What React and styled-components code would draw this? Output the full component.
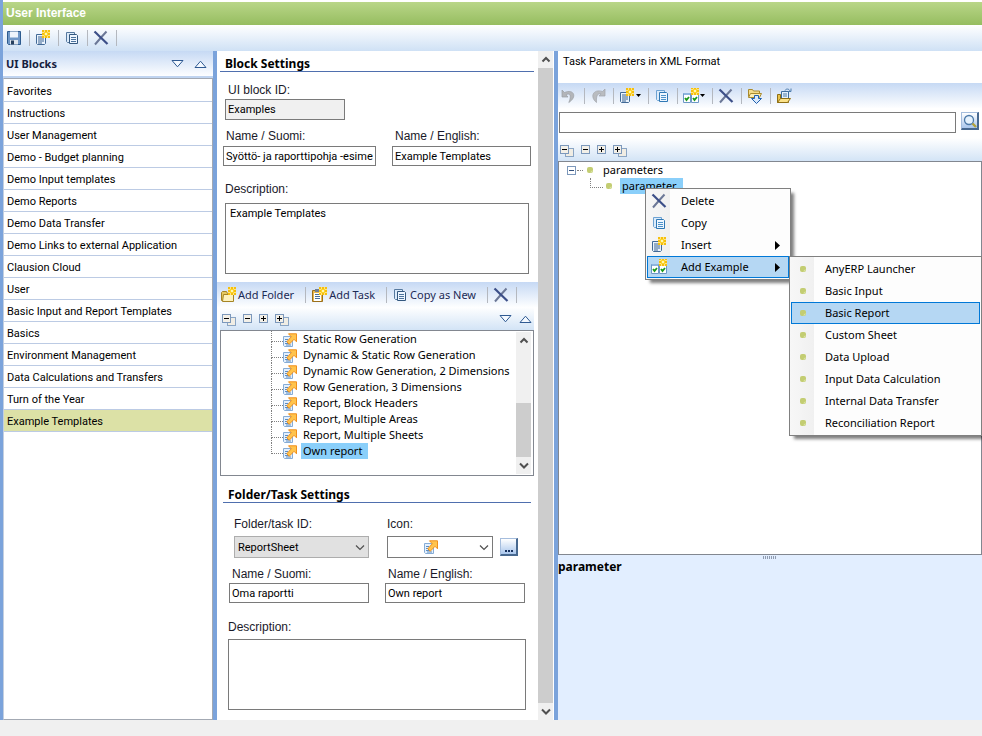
import React from 'react';
import styled, { createGlobalStyle, css } from 'styled-components';

const GlobalStyle = createGlobalStyle`
  :root {
    --font-ui: Roboto, 'Liberation Sans', sans-serif;
    --font-label: 'Liberation Sans', Arial, sans-serif;
    --font-tree: 'Noto Sans', 'Open Sans', sans-serif;
    --splitter: #7ba3db;
    --bar: linear-gradient(#c6d9f4, #fdfeff);
    --bar-light: linear-gradient(#ffffff, #d3e4f6);
    --highlight: #8acffa;
  }

  * {
    box-sizing: border-box;
  }

  body {
    margin: 0;
    background: #f0f0f0;
    color: #000;
    font-family: var(--font-ui);
    font-size: 11px;
  }

  button,
  input,
  select,
  textarea {
    font: inherit;
    color: inherit;
  }

  ul {
    margin: 0;
    padding: 0;
    list-style: none;
  }

  svg {
    display: block;
    flex: none;
  }
`;

/* ---------- layout ---------- */

const Window = styled.div`
  display: flex;
  flex-direction: column;
  min-height: 100vh;
  padding-bottom: 16px;
  overflow: hidden;
`;

const Frame = styled.div`
  flex: 1;
  display: flex;
  flex-direction: column;
  border-left: 3px solid var(--splitter);
  background: #fff;
`;

const TitleBar = styled.h1`
  margin: 2px 0 0;
  padding: 0 3px;
  height: 23px;
  font: bold 12px/22px var(--font-label);
  color: #fff;
  background: linear-gradient(#b9d688, #96bd60);
`;

const MainToolbar = styled.div`
  display: flex;
  align-items: center;
  height: 26px;
  padding: 0 3px;
  background: linear-gradient(#ffffff, #cfe1f5);
`;

const Workspace = styled.main`
  flex: 1;
  display: flex;
`;

const Sidebar = styled.nav`
  flex: none;
  display: flex;
  flex-direction: column;
  width: 210px;
  background: #c0d4f0;
`;

const Center = styled.section`
  flex: none;
  display: flex;
  width: 341px;
  border-left: 4px solid var(--splitter);
`;

const CenterContent = styled.div`
  flex: 1;
  padding-bottom: 10px;
`;

const Details = styled.section`
  flex: 1;
  display: flex;
  flex-direction: column;
  min-width: 0;
  border-left: 4px solid var(--splitter);
  background: #e2eeff;
`;

/* ---------- toolbars ---------- */

const Toolbar = styled.div`
  display: flex;
  align-items: center;
  height: 25px;
  padding: 0 3px;
  background: var(--bar);
  font: 11px/16px var(--font-tree);
  color: #1c2a55;
`;

const ToolButton = styled.button`
  display: flex;
  align-items: center;
  gap: ${({ $menu }) => ($menu ? '1px' : '2px')};
  height: 20px;
  padding: 0 ${({ $text }) => ($text ? '4px' : '0')} 0 0;
  border: 0;
  background: none;
  white-space: nowrap;
`;

const Separator = styled.span`
  width: 1px;
  height: 16px;
  margin: 0 5px 0 7px;
  background: #b4b8bf;
`;

const TreeBar = styled.div`
  display: flex;
  align-items: center;
  gap: 7px;
  height: 23px;
  margin: ${({ $inset }) => ($inset ? '0 4px 0 3px' : '0')};
  padding: 0 2px;
  background: var(--bar-light);
`;

const Spacer = styled.span`
  flex: 1;
`;

const SidebarHead = styled.div`
  display: flex;
  align-items: center;
  gap: 10px;
  height: 25px;
  margin-bottom: 2px;
  padding: 0 6px 0 3px;
  background: var(--bar);
`;

const SidebarTitle = styled.h2`
  flex: 1;
  margin: 0;
  font: bold 11px/16px var(--font-tree);
  color: #16213f;
`;

const BlockList = styled.ul`
  flex: 1;
  padding-top: 1px;
  border: 1px solid #a3a9b3;
  border-left-color: #c4cfdf;
  background: #fff;
`;

const BlockLink = styled.a`
  display: block;
  height: 22px;
  padding: 0 3px;
  border-bottom: 1px solid #bccbe4;
  line-height: 23px;
  color: #000;
  text-decoration: none;
  background: ${({ $active }) => ($active ? '#dce1a6' : 'transparent')};
`;

/* ---------- form ---------- */

const SectionTitle = styled.h2`
  height: 21px;
  margin: ${({ $margin }) => $margin};
  padding: 5px 5px 0;
  border-bottom: 1px solid #4f6fae;
  font: bold 12px/15px var(--font-tree);
`;

const FieldRow = styled.div`
  display: grid;
  grid-template-columns: ${({ $columns }) => $columns || '1fr'};
  column-gap: ${({ $gap }) => $gap || '16px'};
  align-items: end;
  margin: ${({ $margin }) => $margin};
`;

const Field = styled.div`
  flex: 1;
  display: flex;
  flex-direction: column;
  gap: ${({ $gap }) => $gap || '2px'};
  min-width: 0;
`;

const IconPicker = styled.div`
  display: flex;
  align-items: flex-end;
  gap: 7px;
`;

const Label = styled.label`
  padding-left: ${({ $indent }) => $indent || '0'};
  font: 12px/16px var(--font-label);
  color: #1a1a2a;
`;

const boxed = css`
  width: 100%;
  border: 1px solid #7a7a7a;
  border-radius: 0;
  background: #fff;
  outline: 0;
`;

const TextInput = styled.input`
  ${boxed};
  height: 20px;
  padding: 0 2px;

  &:disabled {
    height: 21px;
    background: #f0f0f0;
    color: #000;
  }
`;

const TextArea = styled.textarea`
  ${boxed};
  display: block;
  height: 71px;
  padding: 3px 4px;
  resize: none;
`;

const SelectWrap = styled.div`
  position: relative;
`;

const Select = styled.select`
  ${boxed};
  display: block;
  height: 22px;
  padding: 0 3px;
  border-color: ${({ $filled }) => ($filled ? '#adadad' : '#7a7a7a')};
  background: ${({ $filled }) => ($filled ? '#e1e1e1' : '#fff')};
  appearance: none;
`;

const SelectOverlay = styled.span`
  position: absolute;
  inset: 0;
  display: flex;
  align-items: center;
  justify-content: flex-end;
  gap: 41px;
  padding-right: 4px;
  pointer-events: none;
`;

const SquareButton = styled.button`
  display: flex;
  align-items: center;
  justify-content: center;
  flex: none;
  width: 18px;
  height: 18px;
  margin-bottom: 2px;
  padding: 0;
  border: 1px solid #a5bddd;
  border-right: 2px solid #47688f;
  border-bottom: 2px solid #47688f;
  background: linear-gradient(#ffffff, #a9c6ec);
`;

/* ---------- trees ---------- */

const TreeBox = styled.div`
  display: flex;
  height: 146px;
  margin: 0 4px 0 3px;
  border: 1px solid #828790;
  background: #fff;
`;

const TreeList = styled.ul`
  flex: 1;
  margin-left: 50px;
  font: 11px/16px var(--font-tree);
`;

const TreeRow = styled.li`
  position: relative;
  display: flex;
  align-items: center;
  gap: 4px;
  height: 16px;
  padding-left: 12px;
  white-space: nowrap;

  &:before {
    content: '';
    position: absolute;
    left: 0;
    top: 0;
    width: 11px;
    height: 10px;
    border-left: 1px dotted #808080;
    border-bottom: 1px dotted #808080;
  }

  &:not(:last-child):after {
    content: '';
    position: absolute;
    left: 0;
    top: 10px;
    height: 6px;
    border-left: 1px dotted #808080;
  }

  svg {
    margin-top: 2px;
  }
`;

const NodeLabel = styled.span`
  padding: 0 6px 0 2px;
  line-height: 16px;
  background: ${({ $selected }) => ($selected ? 'var(--highlight)' : 'transparent')};
`;

const ParamsTree = styled.div`
  height: 394px;
  padding: 0 8px;
  border: 1px solid #828790;
  background: #fff;
  font: 11px/16px var(--font-tree);
`;

const ParamRow = styled.div`
  display: flex;
  align-items: center;
  gap: 8px;
  height: 16px;
`;

const ParamExpander = styled.span`
  display: flex;
  align-items: center;
  width: 12px;

  &:after {
    content: '';
    width: 6px;
    flex: none;
    margin-left: 1px;
    border-top: 1px dotted #808080;
  }
`;

const ParamChild = styled(ParamRow)`
  position: relative;
  margin-left: 24px;
  padding-left: 15px;

  &:before {
    content: '';
    position: absolute;
    left: -1px;
    top: 0;
    width: 12px;
    height: 9px;
    border-left: 1px dotted #808080;
    border-bottom: 1px dotted #808080;
  }
`;

/* ---------- scrollbar ---------- */

const ScrollTrack = styled.div`
  flex: none;
  display: flex;
  flex-direction: column;
  align-items: center;
  justify-content: space-between;
  width: ${({ $inner }) => ($inner ? '15px' : '16px')};
  margin: ${({ $inner }) => ($inner ? '1px 2px 1px 0' : '0')};
  border-right: ${({ $inner }) => ($inner ? '0' : '1px solid #fff')};
  background: #f0f0f0;
`;

const ScrollArrow = styled.span`
  display: flex;
  align-items: center;
  justify-content: center;
  height: 17px;
`;

const ScrollThumb = styled.span`
  width: 100%;
  flex: ${({ $grow }) => $grow || '0 0 54px'};
  margin-top: ${({ $grow }) => ($grow ? '0' : 'auto')};
  background: #cdcdcd;
`;

/* ---------- menus ---------- */

const Menu = styled.ul`
  position: absolute;
  left: ${({ $left }) => $left};
  top: ${({ $top }) => $top};
  z-index: 2;
  width: ${({ $width }) => $width};
  padding: 1px;
  border: 1px solid #808080;
  background: linear-gradient(90deg, #f7f7f7, #f0f0f0 24px, #fdfdfd 24px);
  box-shadow: 4px 4px 3px -1px rgba(0, 0, 0, 0.5);
  font: 11px/20px var(--font-tree);
`;

const MenuEntry = styled.li`
  position: relative;
`;

const MenuButton = styled.button`
  display: flex;
  align-items: center;
  width: 100%;
  height: 22px;
  padding: 0 8px 0 3px;
  border: 1px solid ${({ $active }) => ($active ? '#0078d7' : 'transparent')};
  background: ${({ $active }) => ($active ? '#b5d7f3' : 'transparent')};
  text-align: left;
  white-space: nowrap;
`;

const MenuText = styled.span`
  flex: 1;
  padding-left: 14px;
`;

/* ---------- right pane ---------- */

const PaneTitle = styled.h2`
  height: 32px;
  margin: 0;
  padding: 0 5px;
  font: 11px/21px var(--font-ui);
  background: #fff;
`;

const SearchRow = styled.div`
  display: flex;
  align-items: center;
  gap: 5px;
  height: 30px;
  padding: 0 3px 2px 1px;
  background: #fff;
`;

const SearchInput = styled(TextInput)`
  flex: 1;
  height: 21px;
`;

const Grip = styled.div`
  width: 14px;
  height: 3px;
  margin: 1px auto 0;
  background: repeating-linear-gradient(90deg, #8f9bb0 0 1px, transparent 1px 2px);
`;

const SelectedName = styled.h2`
  margin: 0;
  font: bold 12px/16px var(--font-tree);
`;

/* ---------- icons ---------- */

const Icon = ({ size = 16, children }) => (
  <svg width={size} height={size} viewBox={`0 0 ${size} ${size}`} fill="none" aria-hidden="true">
    {children}
  </svg>
);

const Spark = ({ x = 8, y = 0 }) => (
  <g transform={`translate(${x} ${y})`}>
    <rect width="8" height="8" fill="#fde48a" />
    <path d="M0 0h2v2H0zM3 0h2v2H3zM6 0h2v2H6zM0 3h2v2H0zM6 3h2v2H6zM0 6h2v2H0zM3 6h2v2H3zM6 6h2v2H6z" fill="#f6bf0c" />
    <rect x="2" y="2" width="4" height="4" fill="#fcd42c" />
    <rect x="3" y="3" width="2" height="2" fill="#fff6b4" />
  </g>
);

const SaveIcon = () => (
  <Icon>
    <path d="M1.500 1.500h13v13h-12l-1-1z" fill="#6f97c6" stroke="#2d5b8e" />
    <path d="M4 1.500h8v6H4z" fill="#eef4fb" />
    <path d="M4 10h8v4.500H4z" fill="#dfe6ee" />
    <path d="M5 10.500h3v4H5z" fill="#27405f" />
  </Icon>
);

const NewIcon = () => (
  <Icon>
    <path d="M1.500 4.500h9v9l-1 1h-7l-1-1z" fill="#eaf3fd" stroke="#426a97" />
    <path d="M3 7h5M3 9h6M3 11h6M3 13h4" stroke="#3c6592" />
    <Spark x={7} y={0} />
  </Icon>
);

const CopyIcon = ({ light }) => (
  <Icon>
    <path d="M2.500 2.500h8v10h-7l-1-1z" fill="#dcebfa" stroke={light ? '#6ea3d3' : '#56799f'} />
    <path d="M5.500 4.500h7l1 1v8h-8z" fill="#eef6ff" stroke={light ? '#2f78b5' : '#34587f'} />
    <path d="M7 7.500h5M7 9.500h5M7 11.500h5" stroke={light ? '#4d92c9' : '#4b729c'} />
  </Icon>
);

const DeleteIcon = () => (
  <Icon>
    <path d="M13.500 1.500L8.500 7 2 14.500" stroke="#6c7897" strokeWidth="2" />
    <path d="M1.500 1.500c3 3 8 7.500 13 12.500" stroke="#3c4f88" strokeWidth="2.200" />
  </Icon>
);

const UndoIcon = () => (
  <Icon>
    <path d="M1 2v7h6L5 6.800c3.500-2 6 0 2.800 7.700C16.500 9 13 .5 3.500 4.500z" fill="#b3b5b9" stroke="#9a9da3" strokeWidth=".7" />
  </Icon>
);

const RedoIcon = () => (
  <Icon>
    <path d="M15 1v7H9l2-2.200C8 5 6 7 6.500 14.500 -.5 9 3 .500 12.500 3.500z" fill="#b9bcc0" stroke="#a0a3a9" strokeWidth=".7" />
  </Icon>
);

const ExamplesIcon = () => (
  <Icon>
    <path d="M.5 5.500h7v9h-7zM8.500 5.500h7v9h-7z" fill="#fff" stroke="#6c97c6" />
    <path d="M1 5h6v2H1zM9 5h6v2H9z" fill="#8db5df" />
    <path d="M2 10l1.500 2L6 9M10 10l1.500 2L14 9" stroke="#1c9a1c" strokeWidth="1.800" />
    <Spark x={8} y={-1} />
  </Icon>
);

const ImportIcon = () => (
  <Icon>
    <path d="M1.500 8.500v-7h4l1 1.500h6v5.500z" fill="#f3dc8a" stroke="#a98a2c" />
    <path d="M1.500 9.500l2-4h11l-2 4z" fill="#fbeeb5" stroke="#a98a2c" />
    <path d="M7.500 7.500h4v3h3l-5 5L4.500 10.500h3z" fill="#d9e9fc" stroke="#1f5fae" />
  </Icon>
);

const OpenIcon = () => (
  <Icon>
    <path d="M1.500 14.500v-8h3v5h8v3z" fill="#e9c24a" stroke="#8f6f14" />
    <path d="M5.500 3.500h7v8h-7z" fill="#e4f0fc" stroke="#3f6c9c" />
    <path d="M7 6h4M7 8h4" stroke="#4c7aa8" />
    <path d="M1.500 14.500l3-4h10l-3 4z" fill="#fbe28a" stroke="#8f6f14" />
    <path d="M9 2.500C10 .5 13 .5 14 3M12 3.500h3V.5" stroke="#4d7cad" />
  </Icon>
);

const FolderNewIcon = () => (
  <Icon>
    <path d="M1.500 13.500v-8l1-1h4l1 2h5.500v7z" fill="#e6ca62" stroke="#a58424" />
    <path d="M3.500 7.500h10v7h-11z" fill="#fdf2bd" stroke="#a58424" />
    <Spark x={8} y={0} />
  </Icon>
);

const TaskNewIcon = () => (
  <Icon>
    <path d="M1.500 3.500h10v11h-10z" fill="#e8b850" stroke="#9a6f1c" />
    <path d="M3 6h7v8H3z" fill="#fff" />
    <path d="M4 7.500h5M4 9.500h5M4 11.500h5" stroke="#4b6f98" />
    <path d="M4 2h4v3H4z" fill="#6e7f94" />
    <Spark x={8} y={0} />
  </Icon>
);

const ReportIcon = () => (
  <Icon size={14}>
    <path d="M.5 3.500h9v10h-8l-1-1z" fill="#e4f0fd" stroke="#86acd6" />
    <path d="M2 6.500h3M2 8.500h2M2 10.500h4M3 12h5" stroke="#5c8cc0" />
    <path d="M5.500 .8h8v8L11 6.300 6.200 11.300 3.800 8.800 8.300 3.800z" fill="#ffc44d" stroke="#f08f1c" />
  </Icon>
);

const SearchIcon = () => (
  <Icon size={14}>
    <circle cx="6" cy="6" r="4.500" fill="#e6f2fd" stroke="#4d7aa9" strokeWidth="1.300" />
    <path d="M9.500 9.500l3.500 3.500" stroke="#b2a13a" strokeWidth="2.400" />
  </Icon>
);

const Triangle = ({ up }) => (
  <svg width="13" height="8" viewBox="0 0 13 8" fill="#f4f9ff" aria-hidden="true">
    <path d={up ? 'M1 7.500h11L6.500 1.200z' : 'M1 .5h11L6.500 6.800z'} stroke="#2f5a92" />
  </svg>
);

const Caret = ({ right }) => (
  <svg width="5" height={right ? 9 : 5} viewBox={right ? '0 0 5 9' : '0 0 5 5'} aria-hidden="true">
    <path d={right ? 'M0 0v9l5-4.500z' : 'M0 1h5L2.500 4z'} fill="#000" />
  </svg>
);

const Chevron = ({ up, bold }) => (
  <svg width="10" height="7" viewBox="0 0 10 7" fill="none" aria-hidden="true">
    <path d={up ? 'M1.500 5.500L5 2l3.500 3.500' : 'M1 1.500l4 4 4-4'} stroke="#505050" strokeWidth={bold ? 2 : 1.200} />
  </svg>
);

const Expander = ({ plus, all, tail }) => (
  <svg width={all ? 14 : 9} height={all ? 14 : 9} viewBox={all ? '0 -2 14 14' : '0 0 9 9'} aria-hidden="true">
    {all && <rect x="5.500" y="3.500" width="8" height="8" fill="#f0ede4" stroke="#8aa5c4" />}
    <rect x=".5" y=".5" width="8" height="8" fill={tail ? '#fff' : '#f3f0e8'} stroke="#7c98bb" />
    <path d={plus ? 'M2 4.500h5M4.500 2v5' : 'M2 4.500h5'} stroke={tail ? '#33507c' : '#000'} />
  </svg>
);

const Bullet = () => (
  <svg width="6" height="6" viewBox="0 0 6 6" aria-hidden="true">
    <rect width="6" height="6" rx="2" fill="#c3cd72" />
    <path d="M3 5.500h1.500l1-1V3z" fill="#dbe5a5" />
  </svg>
);

const BulletSlot = styled.span`
  display: flex;
  justify-content: center;
  width: 16px;
`;

const Dots = () => (
  <svg width="10" height="12" viewBox="0 0 10 12" aria-hidden="true">
    <path d="M1 9h2v2H1zM4 9h2v2H4zM7 9h2v2H7z" fill="#17315f" />
  </svg>
);

/* ---------- data ---------- */

const blocks = [
  'Favorites',
  'Instructions',
  'User Management',
  'Demo - Budget planning',
  'Demo Input templates',
  'Demo Reports',
  'Demo Data Transfer',
  'Demo Links to external Application',
  'Clausion Cloud',
  'User',
  'Basic Input and Report Templates',
  'Basics',
  'Environment Management',
  'Data Calculations and Transfers',
  'Turn of the Year',
  'Example Templates',
];

const tasks = [
  'Static Row Generation',
  'Dynamic & Static Row Generation',
  'Dynamic Row Generation, 2 Dimensions',
  'Row Generation, 3 Dimensions',
  'Report, Block Headers',
  'Report, Multiple Areas',
  'Report, Multiple Sheets',
  'Own report',
];

const examples = [
  'AnyERP Launcher',
  'Basic Input',
  'Basic Report',
  'Custom Sheet',
  'Data Upload',
  'Input Data Calculation',
  'Internal Data Transfer',
  'Reconciliation Report',
];

/* ---------- components ---------- */

const BarButton = styled.button`
  display: flex;
  padding: 0;
  border: 0;
  background: none;
`;

const TreeTools = () => (
  <>
    <BarButton aria-label="Collapse all"><Expander all /></BarButton>
    <BarButton aria-label="Collapse"><Expander /></BarButton>
    <BarButton aria-label="Expand"><Expander plus /></BarButton>
    <BarButton aria-label="Expand all"><Expander all plus /></BarButton>
  </>
);

const MoveTools = () => (
  <>
    <BarButton aria-label="Move down"><Triangle /></BarButton>
    <BarButton aria-label="Move up"><Triangle up /></BarButton>
  </>
);

const Scrollbar = ({ inner }) => (
  <ScrollTrack $inner={inner}>
    <ScrollArrow><Chevron up bold /></ScrollArrow>
    <ScrollThumb $grow={inner ? undefined : '1'} />
    <ScrollArrow><Chevron bold /></ScrollArrow>
  </ScrollTrack>
);

const Blocks = () => (
  <Sidebar>
    <SidebarHead>
      <SidebarTitle>UI Blocks</SidebarTitle>
      <MoveTools />
    </SidebarHead>
    <BlockList>
      {blocks.map((name) => (
        <li key={name}>
          <BlockLink href="#" $active={name === 'Example Templates'}>{name}</BlockLink>
        </li>
      ))}
    </BlockList>
  </Sidebar>
);

const BlockSettings = () => (
  <>
    <SectionTitle $margin="0 4px 0 3px">Block Settings</SectionTitle>
    <FieldRow $columns="120px" $margin="10px 8px 0">
      <Field $gap="1px">
        <Label htmlFor="block-id" $indent="3px">UI block ID:</Label>
        <TextInput id="block-id" defaultValue="Examples" disabled />
      </Field>
    </FieldRow>
    <FieldRow $columns="153fr 139fr" $margin="8px 7px 0 6px">
      <Field>
        <Label htmlFor="block-fi" $indent="3px">Name / Suomi:</Label>
        <TextInput id="block-fi" defaultValue="Syöttö- ja raporttipohja -esimerkit" />
      </Field>
      <Field>
        <Label htmlFor="block-en" $indent="3px">Name / English:</Label>
        <TextInput id="block-en" defaultValue="Example Templates" />
      </Field>
    </FieldRow>
    <FieldRow $margin="15px 9px 8px 8px">
      <Field $gap="6px">
        <Label htmlFor="block-desc">Description:</Label>
        <TextArea id="block-desc" defaultValue="Example Templates" />
      </Field>
    </FieldRow>
  </>
);

const TaskTree = () => (
  <>
    <Toolbar>
      <ToolButton $text><FolderNewIcon />Add Folder</ToolButton>
      <Separator />
      <ToolButton $text><TaskNewIcon />Add Task</ToolButton>
      <Separator />
      <ToolButton $text><CopyIcon />Copy as New</ToolButton>
      <Separator />
      <ToolButton aria-label="Delete"><DeleteIcon /></ToolButton>
      <Separator />
    </Toolbar>
    <TreeBar $inset>
      <TreeTools />
      <Spacer />
      <MoveTools />
    </TreeBar>
    <TreeBox>
      <TreeList>
        {tasks.map((name) => (
          <TreeRow key={name}>
            <ReportIcon />
            <NodeLabel $selected={name === 'Own report'}>{name}</NodeLabel>
          </TreeRow>
        ))}
      </TreeList>
      <Scrollbar inner />
    </TreeBox>
  </>
);

const TaskSettings = () => (
  <>
    <SectionTitle $margin="6px 7px 0 6px">Folder/Task Settings</SectionTitle>
    <FieldRow $columns="135fr 131fr" $gap="18px" $margin="13px 20px 0 17px">
      <Field $gap="4px">
        <Label htmlFor="task-id">Folder/task ID:</Label>
        <SelectWrap>
          <Select id="task-id" $filled defaultValue="ReportSheet">
            <option>ReportSheet</option>
          </Select>
          <SelectOverlay><Chevron /></SelectOverlay>
        </SelectWrap>
      </Field>
      <IconPicker>
        <Field $gap="4px">
          <Label htmlFor="task-icon">Icon:</Label>
          <SelectWrap>
            <Select id="task-icon" />
            <SelectOverlay><ReportIcon /><Chevron /></SelectOverlay>
          </SelectWrap>
        </Field>
        <SquareButton aria-label="Browse icons"><Dots /></SquareButton>
      </IconPicker>
    </FieldRow>
    <FieldRow $columns="1fr 1fr" $margin="8px 13px 0 12px">
      <Field $gap="1px">
        <Label htmlFor="task-fi" $indent="3px">Name / Suomi:</Label>
        <TextInput id="task-fi" defaultValue="Oma raportti" />
      </Field>
      <Field $gap="1px">
        <Label htmlFor="task-en" $indent="3px">Name / English:</Label>
        <TextInput id="task-en" defaultValue="Own report" />
      </Field>
    </FieldRow>
    <FieldRow $margin="16px 12px 0 11px">
      <Field $gap="4px">
        <Label htmlFor="task-desc">Description:</Label>
        <TextArea id="task-desc" />
      </Field>
    </FieldRow>
  </>
);

const ContextMenu = () => (
  <Menu $left="54px" $top="10px" $width="146px">
    <MenuEntry>
      <MenuButton><DeleteIcon /><MenuText>Delete</MenuText></MenuButton>
    </MenuEntry>
    <MenuEntry>
      <MenuButton><CopyIcon light /><MenuText>Copy</MenuText></MenuButton>
    </MenuEntry>
    <MenuEntry>
      <MenuButton><NewIcon /><MenuText>Insert</MenuText><Caret right /></MenuButton>
    </MenuEntry>
    <MenuEntry>
      <MenuButton $active><ExamplesIcon /><MenuText>Add Example</MenuText><Caret right /></MenuButton>
      <Menu $left="142px" $top="0" $width="193px">
        {examples.map((name) => (
          <MenuEntry key={name}>
            <MenuButton $active={name === 'Basic Report'}>
              <BulletSlot><Bullet /></BulletSlot>
              <MenuText>{name}</MenuText>
            </MenuButton>
          </MenuEntry>
        ))}
      </Menu>
    </MenuEntry>
  </Menu>
);

const Parameters = () => (
  <Details>
    <PaneTitle>Task Parameters in XML Format</PaneTitle>
    <Toolbar>
      <ToolButton aria-label="Undo"><UndoIcon /></ToolButton>
      <Separator />
      <ToolButton aria-label="Redo"><RedoIcon /></ToolButton>
      <Separator />
      <ToolButton aria-label="Insert" $menu><NewIcon /><Caret /></ToolButton>
      <Separator />
      <ToolButton aria-label="Copy"><CopyIcon light /></ToolButton>
      <Separator />
      <ToolButton aria-label="Add example" $menu><ExamplesIcon /><Caret /></ToolButton>
      <Separator />
      <ToolButton aria-label="Delete"><DeleteIcon /></ToolButton>
      <Separator />
      <ToolButton aria-label="Import"><ImportIcon /></ToolButton>
      <Separator />
      <ToolButton aria-label="Open"><OpenIcon /></ToolButton>
    </Toolbar>
    <SearchRow>
      <SearchInput type="search" aria-label="Search parameters" />
      <SquareButton aria-label="Search"><SearchIcon /></SquareButton>
    </SearchRow>
    <TreeBar>
      <TreeTools />
    </TreeBar>
    <ParamsTree>
      <ParamRow>
        <ParamExpander><Expander tail /></ParamExpander>
        <Bullet />
        <NodeLabel>parameters</NodeLabel>
      </ParamRow>
      <ParamChild>
        <Bullet />
        <NodeLabel $selected>parameter</NodeLabel>
        <ContextMenu />
      </ParamChild>
    </ParamsTree>
    <Grip />
    <SelectedName>parameter</SelectedName>
  </Details>
);

const App = () => (
  <Window>
    <GlobalStyle />
    <Frame>
      <TitleBar>User Interface</TitleBar>
      <MainToolbar>
        <ToolButton aria-label="Save"><SaveIcon /></ToolButton>
        <Separator />
        <ToolButton aria-label="New"><NewIcon /></ToolButton>
        <Separator />
        <ToolButton aria-label="Copy"><CopyIcon /></ToolButton>
        <Separator />
        <ToolButton aria-label="Delete"><DeleteIcon /></ToolButton>
        <Separator />
      </MainToolbar>
      <Workspace>
        <Blocks />
        <Center>
          <CenterContent>
            <BlockSettings />
            <TaskTree />
            <TaskSettings />
          </CenterContent>
          <Scrollbar />
        </Center>
        <Parameters />
      </Workspace>
    </Frame>
  </Window>
);

export default App;
